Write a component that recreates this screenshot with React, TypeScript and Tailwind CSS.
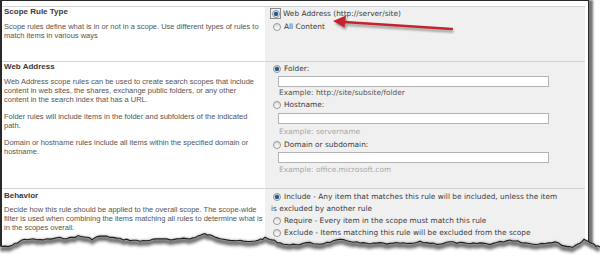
import React from "react";

const edge: [number, number][] = [
  [0, 246], [8, 247], [15, 244], [22, 240], [30, 239], [40, 240], [50, 239], [60, 238],
  [70, 238], [78, 236], [85, 237], [92, 239], [100, 236], [110, 237], [120, 239], [130, 240],
  [140, 241], [150, 240], [160, 239], [170, 240], [180, 238], [190, 239], [198, 236], [205, 234],
  [212, 236], [220, 238], [230, 240], [240, 241], [250, 242], [258, 240], [265, 238], [272, 240],
  [280, 243], [290, 245], [300, 244], [310, 243], [320, 244], [330, 242], [340, 240], [350, 241],
  [360, 243], [370, 244], [380, 243], [390, 244], [400, 243], [410, 244], [420, 242], [430, 243],
  [440, 244], [450, 242], [460, 243], [470, 244], [480, 243], [490, 244], [500, 242], [510, 240],
  [518, 241], [525, 243], [535, 244], [545, 243], [555, 242], [565, 246], [572, 247], [578, 244],
  [584, 240], [590, 242], [596, 246], [600, 247],
];

// add a little jitter between the hand-placed points
function jagged() {
  const pts: [number, number][] = [];
  let seed = 7;
  const rnd = () => {
    seed = (seed * 9301 + 49297) % 233280;
    return seed / 233280;
  };
  for (let i = 0; i < edge.length - 1; i++) {
    const [x1, y1] = edge[i];
    const [x2, y2] = edge[i + 1];
    for (let k = 0; k < 3; k++) {
      const t = k / 3;
      pts.push([x1 + (x2 - x1) * t, y1 + (y2 - y1) * t + (rnd() - 0.5) * 1.6]);
    }
  }
  pts.push(edge[edge.length - 1]);
  return pts;
}

const pts = jagged();
const line = pts.map(([x, y]) => `${x.toFixed(1)},${y.toFixed(1)}`).join(" ");
const fill = `${line} 600,270 0,270`;
const shadow = `${line} ${pts
  .slice()
  .reverse()
  .map(([x, y]) => `${x.toFixed(1)},${(y + 5).toFixed(1)}`)
  .join(" ")}`;

function Radio({ checked }: { checked?: boolean }) {
  return (
    <span className="inline-flex h-[8px] w-[8px] shrink-0 items-center justify-center rounded-full border border-[#979797] bg-gradient-to-b from-[#dcdcdc] to-white align-[-1px]">
      {checked && <span className="h-[4px] w-[4px] rounded-full bg-[#1a5d9b] shadow-[0_0_1px_#0a3a6a]" />}
    </span>
  );
}

function Option({ checked, label }: { checked?: boolean; label: string }) {
  return (
    <div className="flex h-[12px] items-center whitespace-nowrap">
      <span className="ml-[2px] mr-[3px] flex">
        <Radio checked={checked} />
      </span>
      {label}
    </div>
  );
}

const left =
  "w-[263px] shrink-0 overflow-hidden whitespace-nowrap pl-[2px] text-[7.5px] leading-[9px] text-[#555]";
const heading = "h-[10px] text-[8px] font-bold leading-[10px] text-[#3a3a3a]";
const right = "flex-1 bg-[#f0f0f0] pl-[6px] text-[7.4px] text-[#3c3c3c]";
const verdana = { fontFamily: '"DejaVu Sans", Verdana, sans-serif' };

export default function App() {
  return (
    <div className="relative h-[270px] w-[600px] overflow-hidden bg-white">
      <div
        className="relative h-[255px] w-[589px] border-l-2 border-r border-t border-[#2a2a2a] bg-white pt-[5px] shadow-[4px_0_2px_rgba(0,0,0,0.55)]"
        style={{ fontFamily: '"Liberation Sans", Arial, sans-serif' }}
      >
        {/* Scope Rule Type */}
        <div className="mr-[3px] flex h-[55px] border-t border-[#d4d4d4]">
          <div className={left}>
            <div className={heading}>Scope Rule Type</div>
            <p className="mt-[5px]">
              Scope rules define what is in or not in a scope. Use different types of rules to
              <br />
              match items in various ways
            </p>
          </div>
          <div className={right} style={verdana}>
            <div className="flex h-[13px] items-center whitespace-nowrap">
              <span className="-ml-[1px] mr-[2px] flex h-[11px] w-[11px] items-center justify-center border border-[#8a8a8a]">
                <Radio checked />
              </span>
              Web Address (http://server/site)
            </div>
            <div className="flex h-[13px] items-center whitespace-nowrap">
              <span className="ml-[2px] mr-[3px] flex">
                <Radio />
              </span>
              All Content
            </div>
          </div>
        </div>

        {/* Web Address */}
        <div className="mr-[3px] flex h-[127px] border-t border-[#d4d4d4]">
          <div className={left}>
            <div className={heading}>Web Address</div>
            <p className="mt-[5px]">
              Web Address scope rules can be used to create search scopes that include
              <br />
              content in web sites, the shares, exchange public folders, or any other
              <br />
              content in the search index that has a URL.
            </p>
            <p className="mt-[8px]">
              Folder rules will include items in the folder and subfolders of the indicated
              <br />
              path.
            </p>
            <p className="mt-[8px]">
              Domain or hostname rules include all items within the specified domain or
              <br />
              hostname.
            </p>
          </div>
          <div className={`${right} pt-[1px]`} style={verdana}>
            <Option checked label="Folder:" />
            <div className="ml-[7px] mt-[1px] h-[11px] w-[271px] border border-[#b4b4b4] bg-white" />
            <div className="ml-[8px] flex h-[12px] items-center text-[#555]">Example: http://site/subsite/folder</div>
            <Option label="Hostname:" />
            <div className="ml-[7px] mt-[2px] h-[11px] w-[271px] border border-[#b4b4b4] bg-white" />
            <div className="ml-[8px] mt-[2px] flex h-[12px] items-center text-[#a8a8a8]">Example: servername</div>
            <div className="h-[1px]" />
            <Option label="Domain or subdomain:" />
            <div className="ml-[7px] mt-[1px] h-[11px] w-[271px] border border-[#b4b4b4] bg-white" />
            <div className="ml-[8px] mt-[1px] flex h-[12px] items-center text-[#a8a8a8]">Example: office.microsoft.com</div>
          </div>
        </div>

        {/* Behavior */}
        <div className="mr-[3px] flex h-[70px] border-t border-[#d4d4d4]">
          <div className={`${left} pt-[2px]`}>
            <div className={heading}>Behavior</div>
            <p className="mt-[4px]">
              Decide how this rule should be applied to the overall scope. The scope-wide
              <br />
              filter is used when combining the items matching all rules to determine what is
              <br />
              in the scopes overall.
            </p>
          </div>
          <div className={`${right} pt-[2px]`} style={verdana}>
            <p className="whitespace-nowrap leading-[12px]">
              <span className="ml-[2px] mr-[3px] inline-flex">
                <Radio checked />
              </span>
              Include - Any item that matches this rule will be included, unless the item
              <br />
              is excluded by another rule
            </p>
            <Option label="Require - Every item in the scope must match this rule" />
            <Option label="Exclude - Items matching this rule will be excluded from the scope" />
          </div>
        </div>
      </div>

      {/* red call-out arrow */}
      <svg className="absolute left-0 top-0" width="600" height="270" viewBox="0 0 600 270">
        <defs>
          <filter id="sh" x="-10%" y="-50%" width="120%" height="200%">
            <feGaussianBlur stdDeviation="1.2" />
          </filter>
          <filter id="tear" x="-5%" y="-50%" width="110%" height="200%">
            <feGaussianBlur stdDeviation="1.6" />
          </filter>
        </defs>
        <g opacity="0.35" filter="url(#sh)" transform="translate(1.5 2.5)">
          <path d="M452 29 L344 22" stroke="#000" strokeWidth="2.6" fill="none" />
          <path d="M333 21 L346 15.5 L344.5 27.5 Z" fill="#000" />
        </g>
        <path d="M452 29 L344 22" stroke="#c2262c" strokeWidth="2.4" strokeLinecap="round" fill="none" />
        <path d="M333 21 L346 15.5 L344.5 27.5 Z" fill="#c2262c" />

        {/* torn bottom edge */}
        <polygon points={fill} fill="#fff" />
        <polygon points={shadow} fill="#3c3c3c" opacity="0.75" filter="url(#tear)" />
        <polyline points={line} fill="none" stroke="#1e1e1e" strokeWidth="1.1" />
      </svg>
    </div>
  );
}
